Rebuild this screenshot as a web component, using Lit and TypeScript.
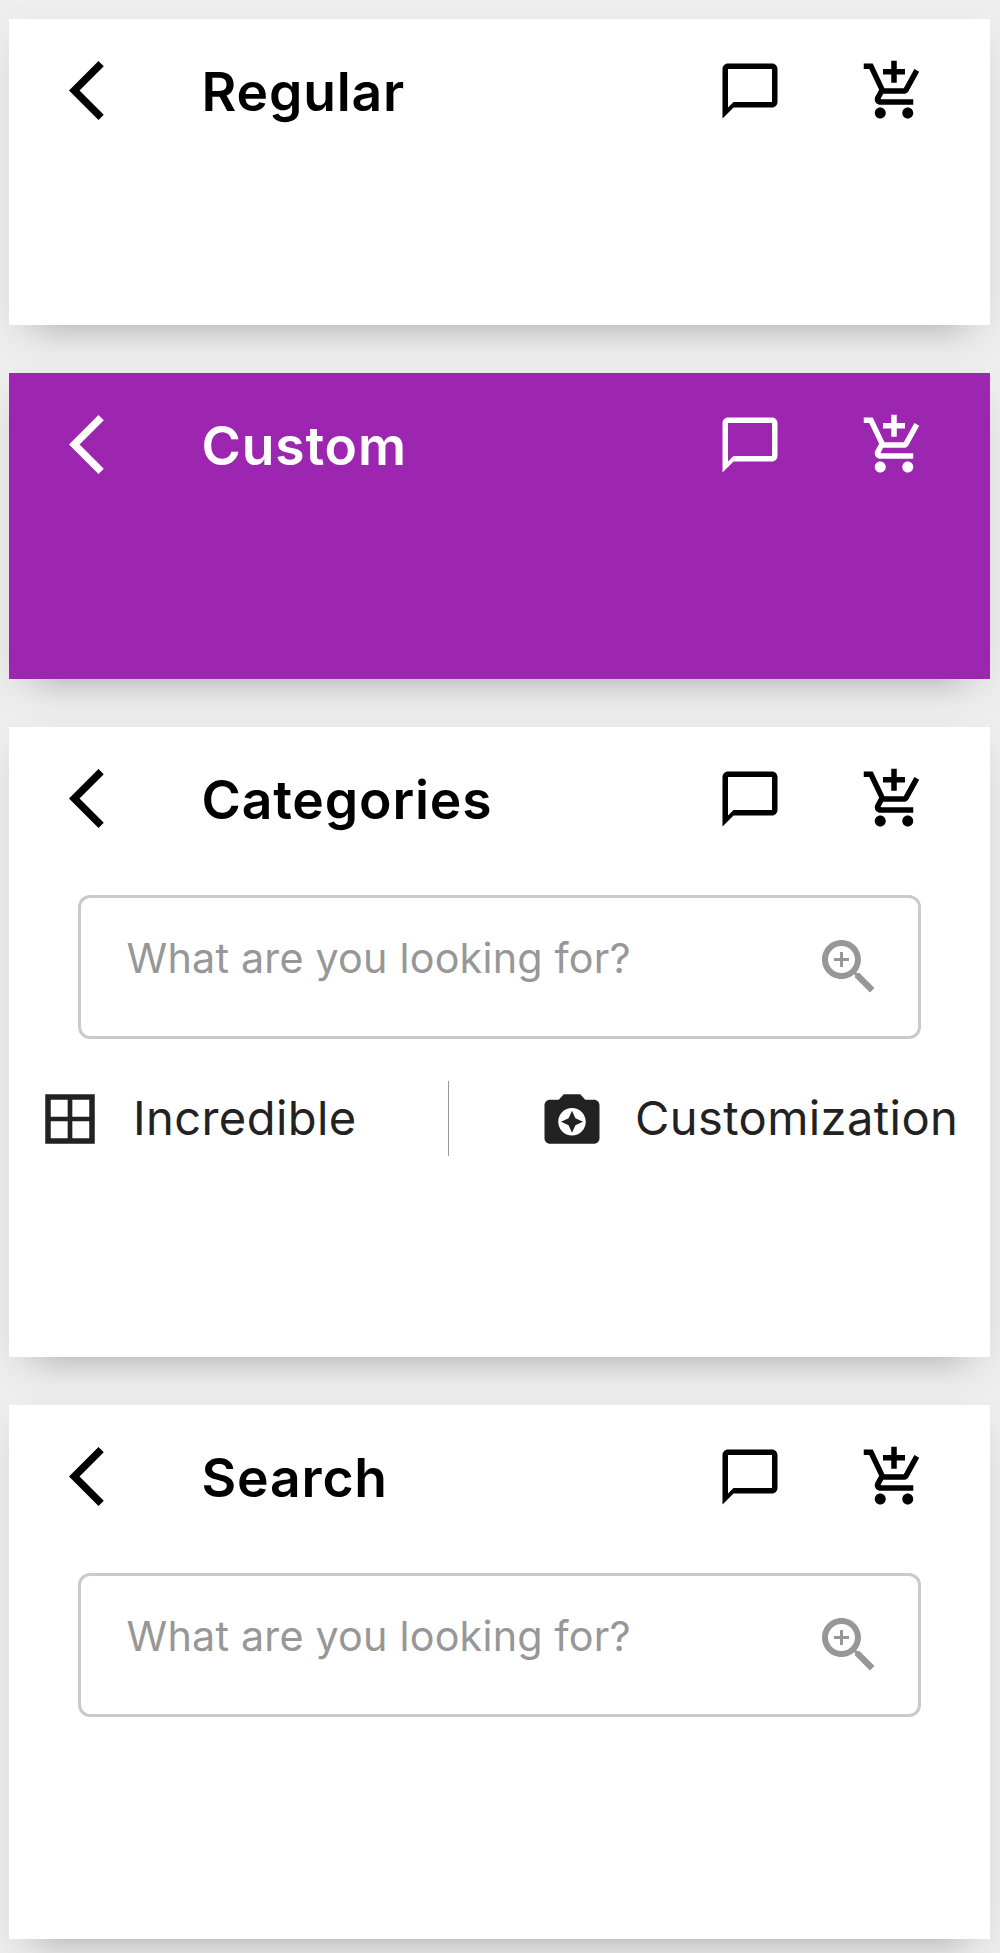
import { LitElement, html, css, svg, nothing } from "lit";
import { customElement, property } from "lit/decorators.js";
import { classMap } from "lit/directives/class-map.js";

const icons = {
  back: svg`<path d="M11.67 3.8L9.9 2.03 0 11.93l9.9 9.9 1.77-1.77L3.54 11.93z"/>`,
  chat: svg`<path d="M20 2H4c-1.1 0-2 .9-2 2v18l4-4h14c1.1 0 2-.9 2-2V4c0-1.1-.9-2-2-2zm0 14H6l-2 2V4h16v12z"/>`,
  cart: svg`<path d="M11 9h2V6h3V4h-3V1h-2v3H8v2h3v3zm-4 9c-1.1 0-1.99.9-1.99 2S5.9 22 7 22s2-.9 2-2-.9-2-2-2zm10 0c-1.1 0-1.99.9-1.99 2s.89 2 1.99 2 2-.9 2-2-.9-2-2-2zm-9.83-3.25l.03-.12.9-1.63h7.45c.75 0 1.41-.41 1.75-1.03l3.86-7.01L19.42 4h-.01l-1.1 2-2.76 5H8.53l-.13-.27L6.16 6l-.95-2-.94-2H1v2h2l3.6 7.59-1.35 2.45c-.16.28-.25.61-.25.96 0 1.1.9 2 2 2h12v-2H7.42c-.13 0-.25-.11-.25-.25z"/>`,
  zoom: svg`<path d="M15.5 14h-.79l-.28-.27C15.41 12.59 16 11.11 16 9.5 16 5.91 13.09 3 9.5 3S3 5.91 3 9.5 5.91 16 9.5 16c1.61 0 3.09-.59 4.23-1.57l.27.28v.79l5 4.99L20.49 19l-4.99-5zm-6 0C7.01 14 5 11.99 5 9.5S7.01 5 9.5 5 14 7.01 14 9.5 11.99 14 9.5 14zm2.5-4h-2v2H9v-2H7V9h2V7h1v2h2v1z"/>`,
  grid: svg`<path fill-rule="evenodd" d="M3 3h18v18H3zM5 5v6.15h6.15V5zM12.85 5v6.15H19V5zM5 12.85V19h6.15v-6.15zM12.85 12.85V19H19v-6.15z"/>`,
  camera: svg`<path d="M9 3L7.17 5H4c-1.1 0-2 .9-2 2v12c0 1.1.9 2 2 2h16c1.1 0 2-.9 2-2V7c0-1.1-.9-2-2-2h-3.17L15 3H9zm3 15c-2.76 0-5-2.24-5-5s2.24-5 5-5 5 2.24 5 5-2.24 5-5 5zm0-1l1.25-2.75L16 13l-2.75-1.25L12 9l-1.25 2.75L8 13l2.75 1.25z"/>`,
};

type IconName = keyof typeof icons;

const icon = (name: IconName, cls: string) =>
  html`<svg class=${cls} viewBox="0 0 24 24" fill="currentColor" aria-hidden="true">${icons[name]}</svg>`;

@customElement("nav-card")
class NavCard extends LitElement {
  @property() heading = "";
  @property({ type: Boolean }) custom = false;
  @property({ type: Boolean }) search = false;
  @property({ type: Boolean }) categories = false;

  static styles = css`
    :host { display: block; }
    .card {
      box-sizing: border-box;
      height: 306px;
      padding-top: 36px;
      background: #fff;
      color: #000;
      box-shadow:
        0 34px 28px -34px rgba(0, 0, 0, 0.19),
        0 14px 40px -8px rgba(0, 0, 0, 0.13);
    }
    .custom { background: #9c26b0; color: #fff; }
    .search { height: 534px; }
    .categories { height: 630px; }
    .header { display: flex; align-items: center; height: 72px; padding: 0 63px 0 60px; }
    .back { width: 71.5px; height: 71.5px; flex: none; }
    .title {
      flex: 1;
      padding: 2px 0 0 61px;
      font-size: 53.4px;
      line-height: 72px;
      font-weight: 600;
      letter-spacing: 0.85px;
      white-space: nowrap;
    }
    .actions { display: flex; gap: 78px; }
    .action { width: 66px; height: 66px; }
    .field {
      display: flex;
      align-items: center;
      justify-content: space-between;
      box-sizing: border-box;
      height: 144px;
      margin: 60px 69px 0;
      padding: 0 33px 0 45.5px;
      border: 3px solid #cacaca;
      border-radius: 12px;
      color: #979797;
    }
    .hint {
      font-size: 41.3px;
      line-height: 60px;
      letter-spacing: 0.2px;
      padding-bottom: 18px;
      white-space: nowrap;
    }
    .zoom { width: 72px; height: 72px; }
    .tabs { display: flex; height: 75px; margin-top: 42px; color: #222; }
    .tab {
      display: flex;
      align-items: center;
      white-space: nowrap;
      font-size: 47.1px;
      line-height: 60px;
      letter-spacing: 0.38px;
    }
    .tab:first-child { box-sizing: border-box; width: 440px; padding-left: 28px; border-right: 1px solid #999; }
    .tab:last-child { padding-left: 90px; }
    .tab-icon { width: 66px; height: 66px; margin-right: 30px; }
    .label { padding-bottom: 2px; }
  `;

  render() {
    const variant = { card: true, custom: this.custom, search: this.search, categories: this.categories };
    return html`
      <section class=${classMap(variant)}>
        <div class="header">
          ${icon("back", "back")}
          <div class="title">${this.heading}</div>
          <div class="actions">${icon("chat", "action")}${icon("cart", "action")}</div>
        </div>
        ${this.search || this.categories
          ? html`<div class="field"><span class="hint">What are you looking for?</span>${icon("zoom", "zoom")}</div>`
          : nothing}
        ${this.categories
          ? html`<div class="tabs">
              <div class="tab">${icon("grid", "tab-icon")}<span class="label">Incredible</span></div>
              <div class="tab">${icon("camera", "tab-icon")}<span class="label">Customization</span></div>
            </div>`
          : nothing}
      </section>
    `;
  }
}

@customElement("app-root")
class AppRoot extends LitElement {
  static styles = css`
    :host {
      display: flex;
      flex-direction: column;
      gap: 48px;
      box-sizing: border-box;
      height: 1953px;
      padding: 19px 10px 0 9px;
      overflow: hidden;
      background: #eee;
      font-family: Inter, "Liberation Sans", sans-serif;
    }
  `;

  render() {
    return html`
      <nav-card heading="Regular"></nav-card>
      <nav-card heading="Custom" custom></nav-card>
      <nav-card heading="Categories" categories></nav-card>
      <nav-card heading="Search" search></nav-card>
    `;
  }
}
